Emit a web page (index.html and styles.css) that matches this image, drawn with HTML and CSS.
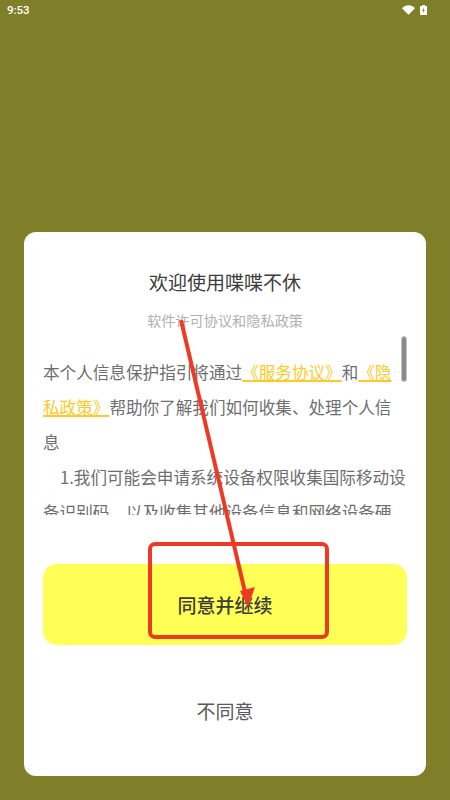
FILE: index.html
```html
<!DOCTYPE html>
<html lang="zh">
<head>
<meta charset="utf-8">
<title>欢迎使用喋喋不休</title>
<link rel="stylesheet" href="styles.css">
</head>
<body>
<div class="screen">
  <div class="status">
    <span class="time">9:53</span>
    <svg class="wifi" viewBox="0 0 13 10" width="13" height="10"><path d="M0 3.2C1.7 1.3 4 .3 6.5 .3S11.3 1.3 13 3.2L6.5 9.8Z" fill="#fff"/></svg>
    <svg class="battery" viewBox="0 0 7 10" width="7" height="10"><path d="M2 0H5V1H7V10H0V1H2Z" fill="#fff"/><path d="M3.8 2.6 2.2 5.8H3.3L3 8 4.8 4.8H3.7Z" fill="#7f7f2a"/></svg>
  </div>
  <div class="spacer"></div>
  <main class="card">
    <h1 class="title">欢迎使用喋喋不休</h1>
    <p class="subtitle">软件许可协议和隐私政策</p>
    <div class="scroll">
      <div class="scroll-text">
        <p>本个人信息保护指引将通过<a href="#">《服务协议》</a>和<a href="#">《隐私政策》</a>帮助你了解我们如何收集、处理个人信息</p>
        <p class="indent">1.我们可能会申请系统设备权限收集国际移动设备识别码，以及收集其他设备信息和网络设备硬件地址</p>
      </div>
      <div class="thumb"></div>
    </div>
    <button class="agree">同意并继续</button>
    <button class="decline">不同意</button>
  </main>
</div>
<svg class="markup" viewBox="0 0 450 800" width="450" height="800">
  <rect x="150" y="544" width="177" height="93" rx="5" fill="none" stroke="#ee3a24" stroke-width="4"/>
  <path d="M181 320 245 592" fill="none" stroke="#ee3a24" stroke-width="4"/>
  <path d="M240 591 255 587 248 607Z" fill="#ee3a24"/>
</svg>
</body>
</html>
```
FILE: styles.css
```css
* { box-sizing: border-box; }
html, body { margin: 0; padding: 0; }
body {
  width: 450px;
  height: 800px;
  overflow: hidden;
  position: relative;
  font-family: "Noto Sans CJK SC", "Noto Sans", sans-serif;
}
.screen {
  width: 450px;
  height: 800px;
  background: #7f7f2a;
  display: flex;
  flex-direction: column;
  padding-bottom: 24px;
}
.status {
  height: 20px;
  display: flex;
  align-items: center;
  padding: 0 23px 1px 7px;
  color: #fff;
}
.time {
  font-family: Roboto, sans-serif;
  font-size: 11.5px;
  font-weight: 500;
  margin-right: auto;
}
.wifi { margin-right: 5px; }
.spacer { flex: 1; }
.card {
  height: 544px;
  margin: 0 24px;
  background: #fff;
  border-radius: 12px;
  padding: 36px 19px 0;
  display: flex;
  flex-direction: column;
}
.title {
  margin: 0;
  height: 28px;
  line-height: 28px;
  font-size: 19px;
  font-weight: 400;
  color: #3c3c3c;
  text-align: center;
}
.subtitle {
  margin: 0;
  padding-top: 11px;
  height: 40px;
  line-height: 26px;
  font-size: 14.2px;
  color: #b0b0b0;
  text-align: center;
}
.scroll {
  height: 179px;
  position: relative;
  overflow: hidden;
}
.scroll-text {
  padding-top: 19px;
  font-size: 16.6px;
  line-height: 35px;
  color: #6e6e6e;
}
.scroll-text p { margin: 0; }
.scroll-text .indent { text-indent: 17px; }
.scroll-text a {
  color: #ffca28;
  text-decoration: underline;
  text-decoration-thickness: 1.5px;
}
.thumb {
  position: absolute;
  top: 0;
  right: 0;
  width: 6px;
  height: 46px;
  border-radius: 3px;
  background: #8a8a8a;
  border: 1px solid #c4c4c4;
}
.agree {
  margin-top: 49px;
  height: 81px;
  border: 0;
  border-radius: 14px;
  background: #ffff55;
  color: #3c3c3c;
  font: 500 19px "Noto Sans CJK SC", sans-serif;
  padding: 0;
}
.decline {
  margin-top: 32px;
  height: 66px;
  border: 0;
  background: none;
  color: #5a5a5a;
  font: 400 19px "Noto Sans CJK SC", sans-serif;
}
.markup {
  position: absolute;
  left: 0;
  top: 0;
  pointer-events: none;
}
```
